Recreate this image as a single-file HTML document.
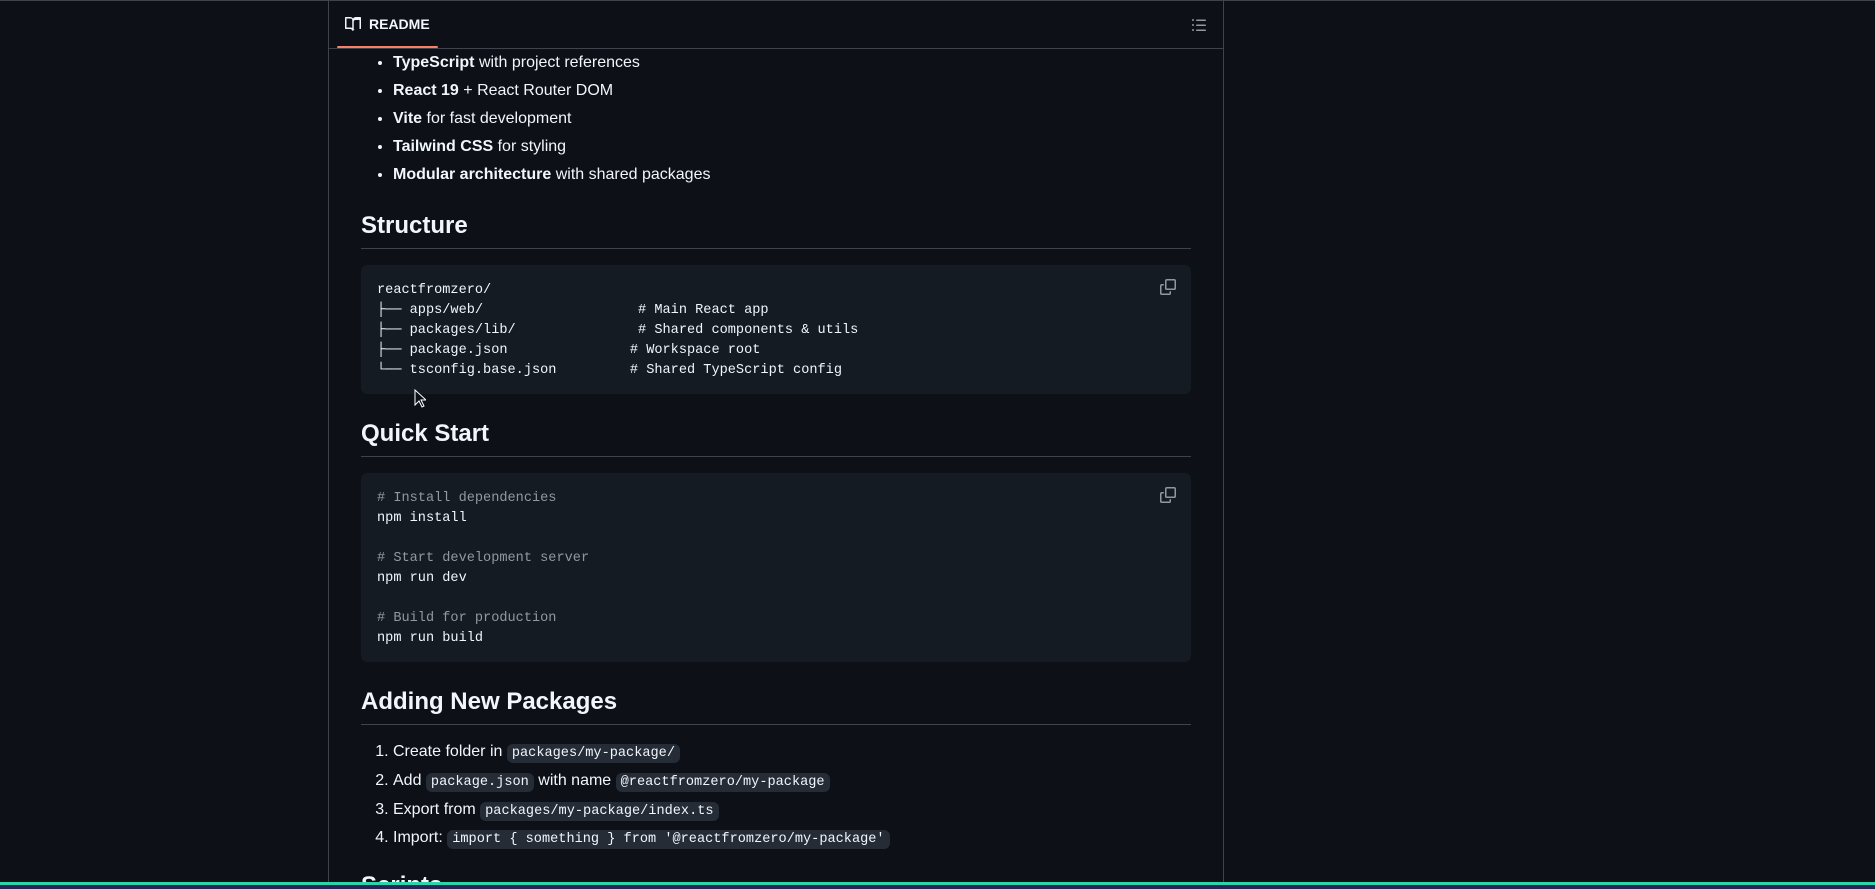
<!DOCTYPE html>
<html><head><meta charset="utf-8"><style>
*{margin:0;padding:0;box-sizing:border-box}
html,body{width:1875px;height:889px;overflow:hidden;background:#0d1117;color:#f0f6fc;font-family:"Liberation Sans",sans-serif;font-size:16px;position:relative}
.top{position:absolute;left:0;top:0;width:1875px;height:1px;background:#3d444d}
.panel{position:absolute;left:328px;top:0;width:896px;height:882px;border-left:1px solid #3d444d;border-right:1px solid #3d444d;overflow:hidden}
.hdr{position:absolute;left:0;top:0;width:894px;height:49px;border-bottom:1px solid #3d444d}
.tab{position:absolute;left:16px;top:16px;font-weight:bold;font-size:14px;display:flex;align-items:center;gap:8px}
.uline{position:absolute;left:8px;top:46px;width:101px;height:2px;background:#f78166;border-radius:2px}
.toc{position:absolute;right:16px;top:17px}
ul,ol{position:absolute;left:32px;padding-left:32px}
li{height:28px;line-height:24px}
li b{font-weight:bold}
h2{position:absolute;left:32px;width:830px;font-size:24px;font-weight:bold;border-bottom:1px solid #3d444d;padding-bottom:7px;line-height:30px}
pre{position:absolute;left:32px;width:830px;background:#151b23;border-radius:6px;padding:16px;font-family:"Liberation Mono",monospace;font-size:13.6px;line-height:20px;color:#f0f6fc}
.cm{color:#9198a1}
.copy{position:absolute;right:15px;top:14px}
code{font-family:"Liberation Mono",monospace;font-size:13.6px;background:#262c36;border-radius:6px;padding:2px 5px}
.bar{position:absolute;left:0;top:882px;width:1875px;height:3px;background:#2dd4a8}
.bar2{position:absolute;left:0;top:885px;width:1875px;height:4px;background:#2a2456}
</style></head><body>
<div class="top"></div>
<div class="panel">
 <div class="hdr">
  <div class="tab"><svg width="16" height="16" viewBox="0 0 16 16" fill="#f0f6fc"><path d="M0 1.75A.75.75 0 0 1 .75 1h4.25c1.23 0 2.32.59 3 1.5A3.74 3.74 0 0 1 11 1h4.25a.75.75 0 0 1 .75.75v10.5a.75.75 0 0 1-.75.75h-4.7a2.25 2.25 0 0 0-2.05 1.32.75.75 0 0 1-1.36 0A2.25 2.25 0 0 0 5.45 13H.75a.75.75 0 0 1-.75-.75Zm7.25 2.5A1.75 1.75 0 0 0 5.5 2.5h-4v9h4c.64 0 1.23.18 1.75.48Zm1.5 9.23c.52-.3 1.11-.48 1.75-.48h4v-9h-4a1.75 1.75 0 0 0-1.75 1.75Z"/></svg>README</div>
  <div class="uline"></div>
  <svg class="toc" width="16" height="16" viewBox="0 0 16 16" fill="#9198a1"><path d="M5.75 2.5h8.5a.75.75 0 0 1 0 1.5h-8.5a.75.75 0 0 1 0-1.5Zm0 5h8.5a.75.75 0 0 1 0 1.5h-8.5a.75.75 0 0 1 0-1.5Zm0 5h8.5a.75.75 0 0 1 0 1.5h-8.5a.75.75 0 0 1 0-1.5ZM2 14a1 1 0 1 1 0-2 1 1 0 0 1 0 2Zm1-6a1 1 0 1 1-2 0 1 1 0 0 1 2 0ZM2 4a1 1 0 1 1 0-2 1 1 0 0 1 0 2Z"/></svg>
 </div>
 <ul style="top:51px">
  <li><b>TypeScript</b> with project references</li>
  <li><b>React 19</b> + React Router DOM</li>
  <li><b>Vite</b> for fast development</li>
  <li><b>Tailwind CSS</b> for styling</li>
  <li><b>Modular architecture</b> with shared packages</li>
 </ul>
 <h2 style="top:211px">Structure</h2>
 <pre style="top:265px;height:129px">reactfromzero/
├── apps/web/                   # Main React app
├── packages/lib/               # Shared components &amp; utils
├── package.json               # Workspace root
└── tsconfig.base.json         # Shared TypeScript config<svg class="copy" width="16" height="16" viewBox="0 0 16 16" fill="#9198a1"><path d="M0 6.75C0 5.78.78 5 1.75 5h1.5a.75.75 0 0 1 0 1.5h-1.5a.25.25 0 0 0-.25.25v7.5c0 .14.11.25.25.25h7.5a.25.25 0 0 0 .25-.25v-1.5a.75.75 0 0 1 1.5 0v1.5A1.75 1.75 0 0 1 9.25 16h-7.5A1.75 1.75 0 0 1 0 14.25Z"/><path d="M5 1.75C5 .78 5.78 0 6.75 0h7.5C15.22 0 16 .78 16 1.750v7.5A1.75 1.75 0 0 1 14.25 11h-7.5A1.75 1.75 0 0 1 5 9.25Zm1.75-.25a.25.25 0 0 0-.25.25v7.5c0 .14.11.25.25.25h7.5a.25.25 0 0 0 .25-.25v-7.5a.25.25 0 0 0-.25-.25Z"/></svg></pre>
 <svg style="position:absolute;left:85px;top:389px" width="12" height="20" viewBox="0 0 12 20"><path d="M1 1v15l4-4 3 6 2-1-3-6h5z" fill="#0d1117" stroke="#fff" stroke-width="1"/></svg>
 <h2 style="top:419px">Quick Start</h2>
 <pre style="top:473px;height:189px"><span class="cm"># Install dependencies</span>
npm install

<span class="cm"># Start development server</span>
npm run dev

<span class="cm"># Build for production</span>
npm run build<svg class="copy" width="16" height="16" viewBox="0 0 16 16" fill="#9198a1"><path d="M0 6.75C0 5.78.78 5 1.75 5h1.5a.75.75 0 0 1 0 1.5h-1.5a.25.25 0 0 0-.25.25v7.5c0 .14.11.25.25.25h7.5a.25.25 0 0 0 .25-.25v-1.5a.75.75 0 0 1 1.5 0v1.5A1.75 1.75 0 0 1 9.25 16h-7.5A1.75 1.75 0 0 1 0 14.25Z"/><path d="M5 1.75C5 .78 5.78 0 6.75 0h7.5C15.22 0 16 .78 16 1.75v7.5A1.75 1.75 0 0 1 14.25 11h-7.5A1.75 1.75 0 0 1 5 9.25Zm1.75-.25a.25.25 0 0 0-.25.25v7.5c0 .14.11.25.25.25h7.5a.25.25 0 0 0 .25-.25v-7.5a.25.25 0 0 0-.25-.25Z"/></svg></pre>
 <h2 style="top:687px">Adding New Packages</h2>
 <ol style="top:740px">
  <li style="height:29px">Create folder in <code>packages/my-package/</code></li>
  <li style="height:29px">Add <code>package.json</code> with name <code>@reactfromzero/my-package</code></li>
  <li style="height:28px">Export from <code>packages/my-package/index.ts</code></li>
  <li>Import: <code>import { something } from '@reactfromzero/my-package'</code></li>
 </ol>
 <h2 style="top:871px;border:none">Scripts</h2>
</div>
<div class="bar"></div><div class="bar2"></div>
</body></html>
